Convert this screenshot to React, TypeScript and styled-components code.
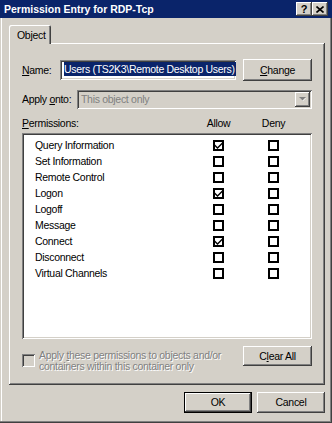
import React from 'react';
import styled, { createGlobalStyle } from 'styled-components';

const GlobalStyle = createGlobalStyle`
  html, body {
    margin: 0;
    background: #d4d0c8;
  }
  body {
    font-family: "Liberation Sans", Arial, sans-serif;
    font-size: 10.5px;
    letter-spacing: -0.3px;
    color: #000;
  }
  * { box-sizing: border-box; }
`;

const raised = `
  box-shadow: inset -1px -1px #404040, inset 1px 1px #ffffff,
    inset -2px -2px #808080, inset 2px 2px #d4d0c8;
`;

const sunken = `
  box-shadow: inset 1px 1px #808080, inset -1px -1px #ffffff,
    inset 2px 2px #404040, inset -2px -2px #d4d0c8;
`;

const Window = styled.div`
  width: 332px;
  height: 423px;
  display: flex;
  flex-direction: column;
  background: #d4d0c8;
  box-shadow: inset -1px -1px #404040, inset -2px -2px #808080,
    inset 1px 0 #d4d0c8, inset 2px 0 #ffffff;
  line-height: 13px;
`;

const TitleBar = styled.div`
  height: 18px;
  flex: none;
  display: flex;
  align-items: center;
  padding: 0 4px;
  background: #0a246a;
  color: #fff;
`;

const Title = styled.span`
  flex: 1;
  font-weight: bold;
  font-size: 10.5px;
  letter-spacing: 0;
`;

const CaptionButton = styled.div`
  width: 16px;
  height: 14px;
  display: flex;
  align-items: center;
  justify-content: center;
  background: #d4d0c8;
  color: #000;
  font-weight: bold;
  font-size: 11px;
  letter-spacing: 0;
  ${raised}
`;

const Body = styled.div`
  flex: 1;
  padding: 7px 7px 0 9px;
  display: flex;
  flex-direction: column;
`;

const TabStrip = styled.div`
  display: flex;
`;

const Tab = styled.div`
  position: relative;
  z-index: 1;
  width: 42px;
  height: 19px;
  margin-bottom: -1px;
  padding: 4px 0 0 8px;
  background: #d4d0c8;
  border-radius: 2px 2px 0 0;
  box-shadow: inset 1px 1px #ffffff, inset -1px 0 #404040, inset -2px 0 #808080;
`;

const Panel = styled.div`
  width: 316px;
  height: 342px;
  display: flex;
  flex-direction: column;
  padding: 16px 13px 0 13px;
  background: #d4d0c8;
  box-shadow: inset -1px -1px #404040, inset 1px 1px #ffffff,
    inset -2px -2px #808080;
`;

const FieldRow = styled.div<{ $top?: number }>`
  display: flex;
  align-items: center;
  margin-top: ${(p) => p.$top ?? 0}px;
`;

const Label = styled.label<{ $width: number }>`
  width: ${(p) => p.$width}px;
  flex: none;
  color: #000;
`;

const TextField = styled.div`
  width: 176px;
  height: 20px;
  padding: 3px 0 0 4px;
  background: #fff;
  white-space: nowrap;
  overflow: hidden;
  ${sunken}
`;

const Selection = styled.span`
  background: #0a246a;
  color: #fff;
  padding: 1px 1px 1px 0;
`;

const Button = styled.button<{ $w?: number; $h?: number; $default?: boolean }>`
  width: ${(p) => p.$w ?? 69}px;
  height: ${(p) => p.$h ?? 21}px;
  flex: none;
  border: none;
  padding: 0;
  margin: 0;
  background: #d4d0c8;
  font: inherit;
  letter-spacing: inherit;
  color: #000;
  ${(p) =>
    p.$default
      ? `box-shadow: inset 0 0 0 1px #000000, inset -2px -2px #404040,
          inset 2px 2px #ffffff, inset -3px -3px #808080;`
      : raised}
`;

const NameButton = styled(Button)`
  margin-left: 7px;
`;

const Combo = styled.div`
  width: 235px;
  height: 19px;
  display: flex;
  align-items: center;
  padding: 0 2px 0 4px;
  background: #d4d0c8;
  color: #808080;
  ${sunken}
`;

const ComboText = styled.span`
  flex: 1;
`;

const DropButton = styled.div`
  width: 15px;
  height: 15px;
  display: flex;
  align-items: center;
  justify-content: center;
  background: #d4d0c8;
  ${raised}
`;

const HeaderGrid = styled.div`
  display: grid;
  grid-template-columns: 191px 11px 44px 11px;
  margin: 8px 0 3px;
  height: 13px;
`;

const ColumnHead = styled.div`
  display: flex;
  justify-content: center;
  white-space: nowrap;
`;

const ListBox = styled.div`
  height: 206px;
  padding: 4px 2px 2px 2px;
  background: #fff;
  ${sunken}
`;

const PermRow = styled.div`
  display: grid;
  grid-template-columns: 178px 11px 44px 11px;
  align-items: center;
  height: 16.1px;
  padding-left: 11px;
`;

const FlatBox = styled.div`
  width: 11px;
  height: 11px;
  border: 2px solid #000;
  background: #fff;
  display: flex;
  align-items: center;
  justify-content: center;
`;

const BottomRow = styled.div`
  display: flex;
  justify-content: space-between;
  align-items: flex-start;
  margin-top: 7px;
`;

const DisabledOption = styled.div`
  display: flex;
  align-items: flex-start;
`;

const DisabledBox = styled.div`
  width: 13px;
  height: 13px;
  margin-top: 8px;
  flex: none;
  background: #d4d0c8;
  ${sunken}
`;

const DisabledText = styled.div`
  margin: 4px 0 0 4px;
  line-height: 11px;
  color: #808080;
  text-shadow: 1px 1px 0 #ffffff;
`;

const Footer = styled.div`
  display: flex;
  justify-content: flex-end;
  gap: 5px;
  width: 316px;
  margin-top: 7px;
`;

const Check = () => (
  <svg width="7" height="7" viewBox="0 0 7 7">
    <path d="M0 2.5 L2.5 5 L7 0.5 L7 2.5 L2.5 7 L0 4.5 Z" fill="#000" />
  </svg>
);

const permissions: [string, boolean][] = [
  ['Query Information', true],
  ['Set Information', false],
  ['Remote Control', false],
  ['Logon', true],
  ['Logoff', false],
  ['Message', false],
  ['Connect', true],
  ['Disconnect', false],
  ['Virtual Channels', false],
];

const App = () => {
  return (
    <>
      <GlobalStyle />
      <Window>
        <TitleBar>
          <Title>Permission Entry for RDP-Tcp</Title>
          <CaptionButton>?</CaptionButton>
          <CaptionButton>
            <svg width="8" height="7" viewBox="0 0 8 7">
              <path d="M0.5 0.5 L7.5 6.5 M7.5 0.5 L0.5 6.5" stroke="#000" strokeWidth="1.6" />
            </svg>
          </CaptionButton>
        </TitleBar>
        <Body>
          <TabStrip>
            <Tab>Object</Tab>
          </TabStrip>
          <Panel>
            <FieldRow>
              <Label $width={38}>
                <u>N</u>ame:
              </Label>
              <TextField>
                <Selection>Users (TS2K3\Remote Desktop Users)</Selection>
              </TextField>
              <NameButton $h={22}>
                <u>C</u>hange
              </NameButton>
            </FieldRow>
            <FieldRow $top={9}>
              <Label $width={55}>
                Apply <u>o</u>nto:
              </Label>
              <Combo>
                <ComboText>This object only</ComboText>
                <DropButton>
                  <svg width="8" height="5" viewBox="0 0 8 5">
                    <path d="M1 1 L7 1 L4 4 Z" fill="#fff" />
                    <path d="M0 0 L7 0 L3.5 3.5 Z" fill="#808080" />
                  </svg>
                </DropButton>
              </Combo>
            </FieldRow>
            <HeaderGrid>
              <div>
                <u>P</u>ermissions:
              </div>
              <ColumnHead>Allow</ColumnHead>
              <div />
              <ColumnHead>Deny</ColumnHead>
            </HeaderGrid>
            <ListBox>
              {permissions.map(([name, allowed]) => (
                <PermRow key={name}>
                  <span>{name}</span>
                  <FlatBox>{allowed && <Check />}</FlatBox>
                  <span />
                  <FlatBox />
                </PermRow>
              ))}
            </ListBox>
            <BottomRow>
              <DisabledOption>
                <DisabledBox />
                <DisabledText>
                  Apply <u>t</u>hese permissions to objects and/or
                  <br />
                  containers within this container only
                </DisabledText>
              </DisabledOption>
              <Button $h={20}>
                C<u>l</u>ear All
              </Button>
            </BottomRow>
          </Panel>
          <Footer>
            <Button $w={68} $default>
              OK
            </Button>
            <Button $w={68}>Cancel</Button>
          </Footer>
        </Body>
      </Window>
    </>
  );
};

export default App;
